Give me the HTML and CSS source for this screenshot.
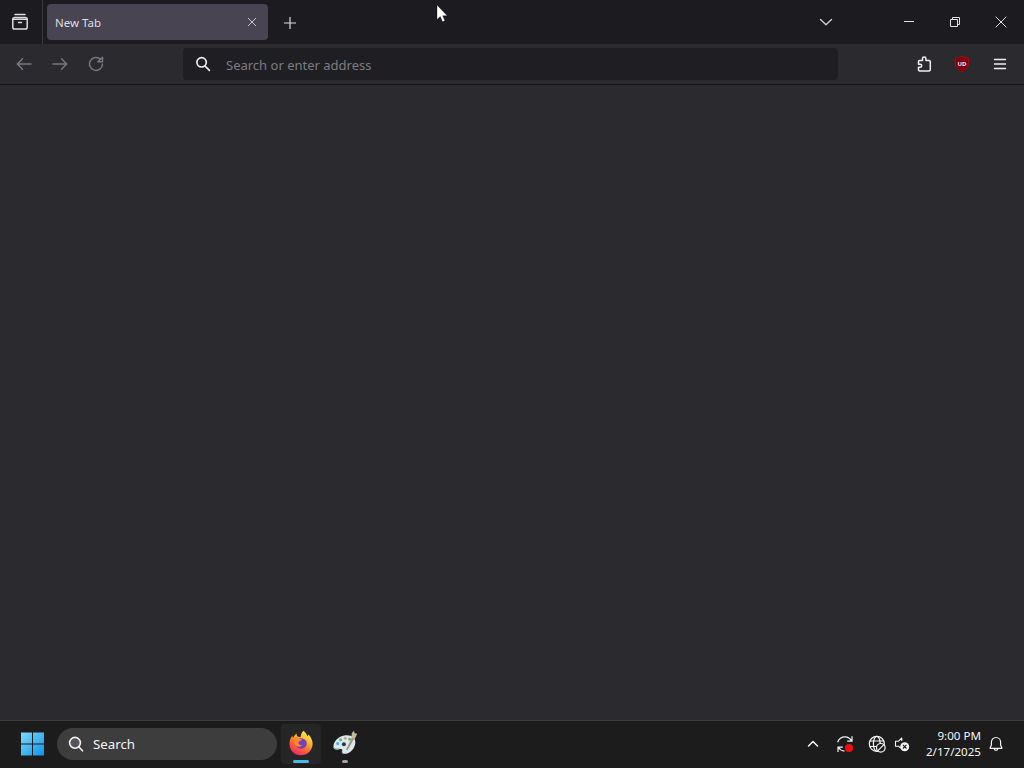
FILE: index.html
```
<!DOCTYPE html>
<html lang="en">
<head>
    <meta charset="UTF-8">
    <meta name="viewport" content="width=device-width, initial-scale=1.0">
    <title>New Tab</title>
    <link rel="stylesheet" href="styles.css">
</head>
<body>
    <div class="desktop">
        <header class="tab-bar">
            <button class="firefox-view" aria-label="Firefox View">
                <svg width="18" height="18" viewBox="0 0 18 18" fill="none" stroke="#dcdbe0" stroke-width="1.5" stroke-linecap="round">
                    <path d="M4 1.500h10"/>
                    <path d="M1.800 6.300a1.800 1.800 0 0 1 1.800-1.800h10.800a1.800 1.800 0 0 1 1.800 1.800v8a1.800 1.800 0 0 1-1.800 1.800H3.600a1.800 1.800 0 0 1-1.800-1.800z"/>
                    <path d="M2 6.200h14M7.500 9.500h3"/>
                </svg>
            </button>
            <div class="tab">
                <span class="tab-title">New Tab</span>
                <svg width="10" height="10" viewBox="0 0 10 10" stroke="#c6c4ce" stroke-width="1"><path d="M1 1l8 8M9 1l-8 8"/></svg>
            </div>
            <button class="new-tab" aria-label="New tab">
                <svg width="14" height="14" viewBox="0 0 14 14" stroke="#dddde0" stroke-width="1.2"><path d="M7 1v12M1 7h12"/></svg>
            </button>
            <div class="window-controls">
                <svg class="list-tabs" width="14" height="14" viewBox="0 0 14 14" fill="none" stroke="#cfcfd3" stroke-width="1.4" stroke-linecap="round" stroke-linejoin="round"><path d="M1.500 4.500L7 9.800l5.500-5.300"/></svg>
                <svg width="12" height="12" viewBox="0 0 12 12" stroke="#e0e0e2" stroke-width="1"><path d="M1 5.500h10"/></svg>
                <svg width="12" height="12" viewBox="0 0 12 12" fill="none" stroke="#e0e0e2" stroke-width="1"><path d="M1.500 3.500h7v7h-7zM3.500 3.500v-2h7v7h-2"/></svg>
                <svg width="12" height="12" viewBox="0 0 12 12" stroke="#e0e0e2" stroke-width="1"><path d="M.7.7l10.600 10.600M11.300.7L.7 11.300"/></svg>
            </div>
        </header>

        <nav class="toolbar">
            <div class="nav-buttons">
                <svg width="16" height="16" viewBox="0 0 16 16"><path d="M15 8H1.500M6.500 2.800L1.300 8l5.200 5.200"/></svg>
                <svg width="16" height="16" viewBox="0 0 16 16"><path d="M1 8h13.500M9.500 2.800L14.700 8l-5.200 5.200"/></svg>
                <svg width="16" height="16" viewBox="0 0 16 16"><path d="M12.600 3.300A6.500 6.500 0 1 0 14.500 8M14.500 1.200v4.600H9.800z"/></svg>
            </div>
            <div class="url-bar">
                <svg width="16" height="16" viewBox="0 0 16 16" fill="none" stroke="#f0f0f3" stroke-width="1.700" stroke-linecap="round"><circle cx="6.600" cy="6.300" r="4.700"/><path d="M10 10l4.400 4.400"/></svg>
                <span class="placeholder">Search or enter address</span>
            </div>
            <div class="extensions">
                <svg width="16" height="18" viewBox="0 0 16 18" fill="none" stroke="#f0f0f3" stroke-width="1.500" stroke-linejoin="round"><path d="M3.500 5.500h3V3.600a1.700 1.700 0 0 1 3.400 0v1.900h3.200a1.200 1.200 0 0 1 1.200 1.200v8a1.200 1.200 0 0 1-1.200 1.200H3.700a1.200 1.200 0 0 1-1.200-1.200v-2.400h1.700a1.500 1.500 0 0 0 0-3H2.500V6.500a1 1 0 0 1 1-1z"/></svg>
                <svg class="ublock" width="16" height="18" viewBox="0 0 16 18">
                    <path d="M8 1.200C6 2.500 3.800 3.100 1.400 3.200v5.200c0 4.100 2.800 6.500 6.600 8.200 3.800-1.700 6.600-4.100 6.600-8.200V3.200C12.200 3.100 10 2.500 8 1.200z" fill="#7d000c" stroke="#a80a1a" stroke-width="1"/>
                    <text x="8" y="10.700" text-anchor="middle">UD</text>
                </svg>
                <svg width="14" height="14" viewBox="0 0 14 14" stroke="#f0f0f3" stroke-width="1.400" stroke-linecap="round"><path d="M1.500 2.500h11M1.500 7h11M1.500 11.500h11"/></svg>
            </div>
        </nav>

        <main class="page"></main>

        <footer class="taskbar">
            <svg class="start" width="24" height="24" viewBox="0 0 24 24">
                <defs>
                    <linearGradient id="win" x1="0" y1="0" x2="24" y2="24" gradientUnits="userSpaceOnUse">
                        <stop offset="0" stop-color="#82dcfa"/>
                        <stop offset="1" stop-color="#0a93ec"/>
                    </linearGradient>
                </defs>
                <path d="M1 .500h11v11H1zM13 .500h11v11H13zM1 12.500h11v11H1zM13 12.500h11v11H13z" fill="url(#win)"/>
            </svg>
            <div class="search-box">
                <svg width="16" height="16" viewBox="0 0 16 16" fill="#55565b" stroke="#f2f2f2" stroke-width="1.600" stroke-linecap="round"><circle cx="7" cy="6.800" r="5.400"/><path d="M11 11l3.500 3.800"/></svg>
                <span>Search</span>
            </div>
            <div class="app active">
                <svg width="24" height="26" viewBox="0 0 24 26">
                    <defs>
                        <linearGradient id="fox" x1="19" y1="2" x2="6" y2="24" gradientUnits="userSpaceOnUse">
                            <stop offset="0" stop-color="#fff04a"/>
                            <stop offset=".35" stop-color="#ffb32c"/>
                            <stop offset=".65" stop-color="#ff6637"/>
                            <stop offset="1" stop-color="#f02c65"/>
                        </linearGradient>
                    </defs>
                    <path d="M14.500.800c2 1.700 3.100 3.200 3.700 5.200.8-.4 1.200-1 1.400-1.600 2.500 2.700 4 6 4 9.300 0 6.700-5.300 11.500-11.700 11.500S.5 20.300.5 13.900c0-3.400 1-6.200 2.800-8.200.1 1 .4 1.700.9 2.200C5 5.700 6.300 4.300 7.700 3.500c-.2 1.200.1 2.300.9 3.100l2.900.6c.4-2.800 1.200-4.800 3-6.400z" fill="url(#fox)"/>
                    <path d="M7.500 9.800c2.500-2.500 8-2 9.700 1.500 1.700 3.700-.8 7.400-4.900 7.400-3.300 0-5.800-2.400-5.400-5.200z" fill="#7540bd"/>
                    <path d="M4.200 8c3-1.400 5.500-.9 7 1.100l1.800.5c-.6 1.200-1.900 1.400-2.900 2-1 .6-.9 1.600-.3 2.500 1 1.300 2.400 1.200 3.600.7-1 1.900-3.400 2.500-5.500 1.500-2.700-1.100-3.600-4-2.200-6z" fill="#ff8a22"/>
                </svg>
                <span class="indicator"></span>
            </div>
            <div class="app paint">
                <svg width="26" height="26" viewBox="0 0 26 26">
                    <path d="M13.500 5.200c6.100-.5 10.400 2.300 9.800 7.700-.5 5.600-5.200 11-10.900 11-2.400 0-2.800-1.300-2.200-2.800.6-1.700-.4-2.400-2-2.100-3.200.7-6.400 1.300-6.700-1.900C1 11.300 7 5.700 13.500 5.200z" fill="#dce9ec"/>
                    <path d="M1.700 17.200c.7 2.200 3.500 1.800 6 1.200M10 21.500c0 2 2 2.300 4 1.800" fill="none" stroke="#8fb4bd" stroke-width="1"/>
                    <circle cx="5.700" cy="13.600" r="1.600" fill="#4cb3c8"/>
                    <circle cx="8.600" cy="9.800" r="1.600" fill="#66b768"/>
                    <circle cx="13.200" cy="8.200" r="1.500" fill="#e09a8a"/>
                    <circle cx="17.600" cy="9.200" r="1.400" fill="#68ae69"/>
                    <circle cx="11.900" cy="14.300" r="2" fill="#1d3d49"/>
                    <path d="M14 19.500L20.200 7l2.200 1.200-7 12.200z" fill="#a69582"/>
                    <path d="M19.500 7.500l.2-4.300 2.200-2.400.8 2.400 2.500.5-2.500 5.200z" fill="#c2b8a4"/>
                </svg>
                <span class="indicator"></span>
            </div>

            <div class="tray">
                <svg class="tray-arrow" width="12" height="12" viewBox="0 0 12 12" fill="none" stroke="#f4f4f4" stroke-width="1.500" stroke-linecap="round" stroke-linejoin="round"><path d="M1.500 8L6 3.500 10.500 8"/></svg>
                <svg class="tray-update" width="18" height="18" viewBox="0 0 18 18" fill="none" stroke="#f4f4f4" stroke-width="1.200">
                    <path d="M1.600 7.200C3 3.400 5.800 1.800 9 1.800c2.900 0 5 1.400 6.500 3.800M16 1.200v4.900h-4.800M2 17v-4.900h4.800M2.500 12.500c1.300 2 3.300 3.500 6 3.700"/>
                    <circle cx="13" cy="13" r="4" fill="#f60a13" stroke="none"/>
                </svg>
                <svg class="tray-network" width="18" height="18" viewBox="0 0 18 18" fill="none" stroke="#f4f4f4" stroke-width="1.200">
                    <circle cx="8.800" cy="8.800" r="7.500"/>
                    <ellipse cx="8.800" cy="8.800" rx="3.400" ry="7.500"/>
                    <path d="M2 6h13.500M2 11.500h12"/>
                    <circle cx="12.800" cy="12.800" r="4.300" fill="#1c1c1c"/>
                    <path d="M9.900 15.700l5.800-5.800"/>
                </svg>
                <svg class="tray-volume" width="16" height="16" viewBox="0 0 16 16" fill="none" stroke="#f4f4f4" stroke-width="1.100" stroke-linejoin="round">
                    <path d="M7.800 5V2L4.500 5.200H1.500v5h3l2 1.800"/>
                    <circle cx="10.700" cy="10.700" r="4.500" fill="#f4f4f4" stroke="none"/>
                    <path d="M8.900 8.900l3.600 3.600M12.500 8.900l-3.600 3.600" stroke="#1c1c1c"/>
                </svg>
                <div class="clock">
                    <span>9:00 PM</span>
                    <span class="date">2/17/2025</span>
                </div>
                <svg class="tray-bell" width="16" height="16" viewBox="0 0 16 16" fill="none" stroke="#f4f4f4" stroke-width="1.200" stroke-linejoin="round"><path d="M8 1.500a4.600 4.600 0 0 0-4.600 4.600v3L2 12.300h12l-1.400-3.200v-3A4.600 4.600 0 0 0 8 1.500zM6.200 12.500a1.800 1.800 0 0 0 3.600 0"/></svg>
            </div>
        </footer>

        <svg class="cursor" width="12" height="19" viewBox="0 0 12 19"><path d="M1 1v14.500l3.300-3 2.200 5.300 2.400-1-2.200-5.100h4.500z" fill="#fff" stroke="#000" stroke-width=".3"/></svg>
    </div>
</body>
</html>
```
FILE: styles.css
```
* {
    box-sizing: border-box;
}

body {
    margin: 0;
    background-color: #2b2a2f;
    font-family: "Noto Sans", "Open Sans", sans-serif;
    overflow: hidden;
}

svg {
    display: block;
    flex-shrink: 0;
}

button {
    background: none;
    border: none;
    padding: 0;
}

.desktop {
    display: flex;
    flex-direction: column;
    height: 768px;
    width: 1024px;
}

/* Tab strip */
.tab-bar {
    display: flex;
    height: 44px;
    background-color: #1c1b1f;
}

.firefox-view {
    display: flex;
    align-items: center;
    width: 43px;
    padding-left: 11px;
    border-right: 1px solid #3a393f;
}

.tab {
    display: flex;
    align-items: center;
    justify-content: space-between;
    width: 221px;
    height: 36px;
    margin: 4px 0 0 4px;
    padding: 0 11px 0 8px;
    border-radius: 4px;
    background-color: #484451;
    color: #dedde3;
    font-size: 11.5px;
}

.new-tab {
    margin: 1px 0 0 15px;
}

.window-controls {
    display: flex;
    align-items: center;
    gap: 34px;
    margin-left: auto;
    padding-right: 17px;
}

.list-tabs {
    margin-right: 36px;
}

/* Navigation toolbar */
.toolbar {
    display: flex;
    align-items: center;
    height: 41px;
    padding-right: 17px;
    background-color: #2b2a2f;
    border-bottom: 1px solid #151418;
}

.nav-buttons {
    display: flex;
    gap: 20px;
    width: 183px;
    padding-left: 16px;
    fill: none;
    stroke: #77767c;
    stroke-width: 1.5;
    stroke-linecap: round;
    stroke-linejoin: round;
}

.url-bar {
    display: flex;
    align-items: center;
    gap: 15px;
    width: 655px;
    height: 32px;
    padding-left: 12px;
    border-radius: 4px;
    background-color: #1f1e22;
}

.placeholder {
    padding-top: 2px;
    color: #7d7c82;
    font-size: 13px;
}

.extensions {
    display: flex;
    align-items: center;
    gap: 22px;
    margin-left: auto;
}

.ublock {
    margin-right: 1px;
}

.ublock text {
    fill: #f3e8e9;
    font-size: 6px;
    font-weight: bold;
}

.page {
    flex: 1;
    background-color: #2b2a2f;
}

/* Taskbar */
.taskbar {
    display: flex;
    align-items: center;
    height: 48px;
    padding-bottom: 1px;
    background-color: #1c1c1c;
    border-top: 1px solid #3c3c3f;
    color: #f4f4f4;
}

.start {
    margin-left: 20px;
}

.search-box {
    display: flex;
    align-items: center;
    gap: 9px;
    width: 220px;
    height: 32px;
    margin-left: 13px;
    padding-left: 11px;
    border-radius: 16px;
    background-color: #3d3d3d;
    font-size: 13.3px;
}

.app {
    display: flex;
    flex-direction: column;
    align-items: center;
    justify-content: space-between;
    width: 40px;
    height: 40px;
    margin-left: 4px;
    padding: 6px 0 1px;
    border-radius: 4px;
}

.active {
    background-color: #262626;
}

.indicator {
    width: 6px;
    height: 3px;
    border-radius: 2px;
    background-color: #a0a0a0;
}

.active .indicator {
    width: 16px;
    background-color: #4cb8e8;
}

.tray {
    display: flex;
    align-items: center;
    margin-left: auto;
    padding-right: 20px;
}

.tray-update {
    margin-left: 17px;
}

.tray-network {
    margin-left: 14px;
}

.tray-volume {
    margin-left: 8px;
}

.clock {
    display: flex;
    flex-direction: column;
    width: 71px;
    text-align: right;
    font-size: 11.6px;
    line-height: 16px;
}

.tray-bell {
    margin-left: 7px;
}

/* Mouse pointer */
.cursor {
    position: absolute;
    left: 436px;
    top: 4px;
}
```
